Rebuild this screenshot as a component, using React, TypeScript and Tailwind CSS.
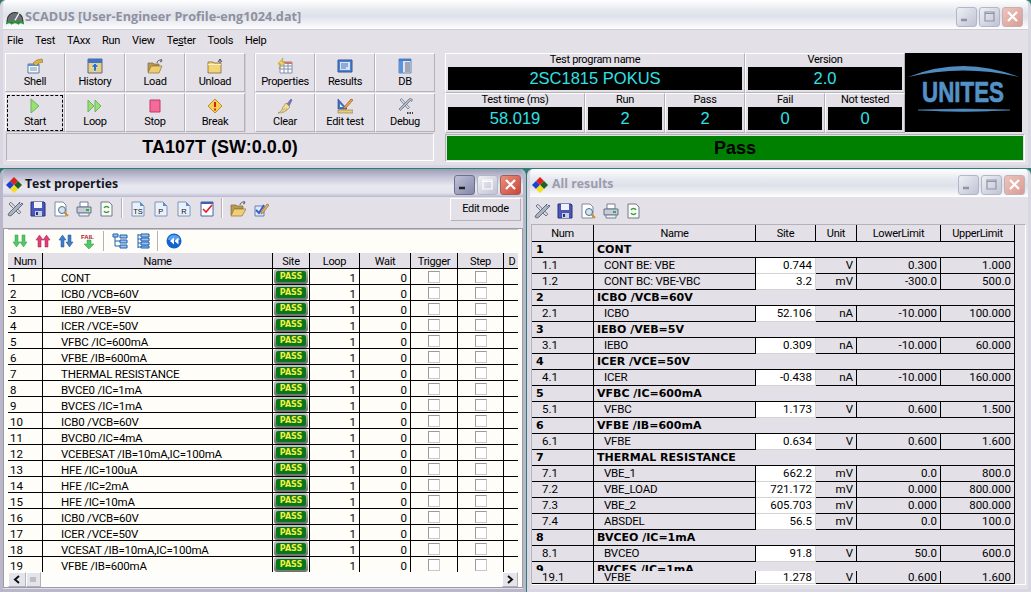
import React from "react";

const bevel = "border border-t-white border-l-white border-r-[#b4b2b8] border-b-[#b4b2b8]";
const sunken = "border border-t-[#b4b2b8] border-l-[#b4b2b8] border-r-white border-b-white";

type IconName = string;

function Icon({ name, size = 16 }: { name: IconName; size?: number }) {
  const c = (() => {
    switch (name) {
      case "shell":
        return (<>
          <path d="M1 6h11v9H1z" fill="#f4f6fb" stroke="#5b7ba8" />
          <path d="M1 6h11v2H1z" fill="#5b8fd0" />
          <path d="M3 10h7M3 12h7" stroke="#7d93b5" />
          <path d="M6 5l4-3 5-1 1 3-4 1-3 3z" fill="#e0b040" stroke="#8a6a20" strokeWidth=".6" />
        </>);
      case "history":
        return (<>
          <path d="M1 1h14v14H1z" fill="#e9cf7c" stroke="#55688a" />
          <path d="M1 1h14v4H1z" fill="#3f73c4" />
          <path d="M8 5l4 4H9.500v4h-3V9H4z" fill="#2f6fc6" stroke="#fff" strokeWidth=".5" />
        </>);
      case "load":
        return (<>
          <path d="M1 5h5l1 1h5v2H5l-3 6H1z" fill="#b89a50" stroke="#7a6a3a" strokeWidth=".7" />
          <path d="M4 8h11l-3 7H1z" fill="#f0cc70" stroke="#8a7440" strokeWidth=".7" />
          <path d="M10 5c0-2 2-3 4-3M14 1l1 2-2 1" stroke="#556" fill="none" />
        </>);
      case "unload":
        return (<>
          <path d="M1 4h5l1 1h7v10H1z" fill="#f3d479" stroke="#7d6b3b" strokeWidth=".8" />
          <path d="M1 6h13v1H1z" fill="#fff0b8" />
          <path d="M11 4l2-3 2 3M13 1v4" stroke="#445" fill="none" strokeWidth=".9" />
        </>);
      case "start":
        return <path d="M4 1l8 7-8 7z" fill="#98e070" stroke="#70b060" />;
      case "loop":
        return (<>
          <path d="M1 2l6 6-6 6z" fill="#98e070" stroke="#70b060" />
          <path d="M8 2l6 6-6 6z" fill="#98e070" stroke="#70b060" />
        </>);
      case "stop":
        return <path d="M3 2h10v12H3z" fill="#f46a98" stroke="#c03868" />;
      case "break":
        return (<>
          <path d="M8 1l7 7-7 7-7-7z" fill="#fbd050" stroke="#b89030" />
          <path d="M8 4v5" stroke="#d02020" strokeWidth="2" />
          <path d="M8 10.500v2" stroke="#d02020" strokeWidth="1.800" />
        </>);
      case "properties":
        return (<>
          <path d="M3 4h12v11H3z" fill="#fdfdfd" stroke="#8090b0" />
          <path d="M8 4h7v2H8z" fill="#e07060" />
          <path d="M3 8h12M3 11h12M7 4v11M11 4v11" stroke="#8090b0" />
          <path d="M6 0L1 6l3 0-2 5 6-7-3 0z" fill="#f8d850" stroke="#a08020" strokeWidth=".5" />
        </>);
      case "results":
        return (<>
          <path d="M1 2h14v12H1z" fill="#4a82d4" stroke="#30558f" />
          <path d="M3 4h10v8H3z" fill="#d4e2f8" />
          <path d="M4 6h7M4 8h7M4 10h5" stroke="#4a72b0" />
        </>);
      case "db":
        return (<>
          <path d="M2 1h12v14H2z" fill="#dfe6f2" stroke="#6a87b0" />
          <path d="M2 1h12v2H2z" fill="#3f7fd0" />
          <path d="M2 3h4v12H2z" fill="#5a94dc" />
          <path d="M8 5h5M8 7h5M8 9h5M8 11h5M8 13h5" stroke="#667" />
        </>);
      case "clear":
        return (<>
          <path d="M10 6l4-5 1 1-3 6z" fill="#7a78c0" stroke="#505090" strokeWidth=".6" />
          <path d="M9 5l4 4-3 3c-2 2-5 3-9 3 3-1 4-3 5-6z" fill="#f2dc98" stroke="#9a8a50" strokeWidth=".7" />
          <path d="M5 14l3-4M8 13l2-3" stroke="#b8a060" strokeWidth=".7" />
        </>);
      case "edit":
        return (<>
          <path d="M1 1v10h9z" fill="#3f74c8" stroke="#2a4f90" strokeWidth=".7" />
          <path d="M3 6v3h3z" fill="#eef" />
          <path d="M1 12h15v3H1z" fill="#e8cd78" stroke="#8a7440" strokeWidth=".6" />
          <path d="M7 9l7-8 2 1-7 8-3 1z" fill="#f0a040" stroke="#805020" strokeWidth=".6" />
        </>);
      case "debug":
        return (<>
          <path d="M3 2l8 9 1.500-1.500-8-9z" fill="#d8dce4" stroke="#60687a" strokeWidth=".7" />
          <path d="M12 1l-9 9-1 1 1.500 1.500 1-1 9-9 1 1 1-1.500-2-2z" fill="#b0bac8" stroke="#60687a" strokeWidth=".7" />
          <path d="M10 15h1.500M12.500 15h1.500M15 15h1" stroke="#111" strokeWidth="1.600" />
        </>);
      case "tools":
        return (<>
          <path d="M2 3l10 10 1.800-1.800-10-10z" fill="#d8dce4" stroke="#50586a" strokeWidth=".8" />
          <path d="M13 1L5 9l-3 3-1 2 2 1 2-1 3-3 8-8-1-1-1.500 1.500-1-1z" fill="#a8b4c4" stroke="#50586a" strokeWidth=".8" />
        </>);
      case "save":
        return (<>
          <path d="M1 1h13l1 1v13H1z" fill="#4a56b8" stroke="#28307a" />
          <path d="M4 1h8v6H4z" fill="#eef2fb" />
          <path d="M5 10h7v5H5z" fill="#c8d0e4" />
          <path d="M6 11h2v3H6z" fill="#28307a" />
        </>);
      case "preview":
        return (<>
          <path d="M2 1h8l3 3v11H2z" fill="#fff" stroke="#7d8ca5" />
          <circle cx="9" cy="9" r="3.500" fill="#cfe6f8" stroke="#5a6a80" />
          <path d="M11.500 11.500l3.500 3.500" stroke="#c89030" strokeWidth="2" />
        </>);
      case "print":
        return (<>
          <path d="M4 1h8v5H4z" fill="#fff" stroke="#70809a" />
          <path d="M1 6h14v6H1z" fill="#c8ccd6" stroke="#60708a" />
          <path d="M3 12h10v3H3z" fill="#eef0f4" stroke="#70809a" />
          <path d="M10 8h3v2h-3z" fill="#30b040" />
        </>);
      case "refresh":
        return (<>
          <path d="M2 1h8l3 3v11H2z" fill="#fbfbf4" stroke="#6a7a90" />
          <path d="M5 7c1-2 4-2 5 0M10 10c-1 2-4 2-5 0" stroke="#30a040" fill="none" strokeWidth="1.300" />
        </>);
      case "docts":
      case "docp":
      case "docr":
        return (<>
          <path d="M2 1h8l4 4v10H2z" fill="#eaf1fb" stroke="#7d96bd" />
          <path d="M10 1v4h4z" fill="#5a8fd4" />
          <text x={name === "docts" ? "3.2" : "5.2"} y="13" fontSize="7.500" fontFamily="Liberation Sans" fill="#111">{name === "docts" ? "TS" : name === "docp" ? "P" : "R"}</text>
        </>);
      case "check":
        return (<>
          <path d="M2 1h12v14H2z" fill="#fff" stroke="#4a62a0" />
          <path d="M2 1h12v2H2z" fill="#3f62b0" />
          <path d="M4 8l3 3 6-7" stroke="#e02020" fill="none" strokeWidth="1.600" />
        </>);
      case "open":
        return (<>
          <path d="M1 4h5l1 1h6v3H5l-3 6H1z" fill="#b89a50" stroke="#7a6a3a" strokeWidth=".7" />
          <path d="M4 8h12l-4 7H1z" fill="#f2cd72" stroke="#8a7440" strokeWidth=".7" />
          <path d="M10 4c0-2 2-3 4-3M14 0l1 2-2 1" stroke="#556" fill="none" />
        </>);
      case "checkpen":
        return (<>
          <path d="M2 5h9v10H2z" fill="#dfe8f8" stroke="#6a7fb0" />
          <path d="M3 9l3 3 5-8" stroke="#2f5fc0" fill="none" strokeWidth="1.800" />
          <path d="M8 11l6-8 2 1-6 8-2 1z" fill="#e8b060" stroke="#806030" strokeWidth=".6" />
        </>);
      case "down":
      case "up":
        return (<g transform={name === "up" ? "rotate(180 8 8)" : undefined}>
          <path d="M3 2h3v7h2l-3.500 5L1 9h2z" fill={name === "up" ? "#e0407a" : "#50c868"} stroke={name === "up" ? "#a01850" : "#2e9848"} strokeWidth=".5" />
          <path d="M10 2h3v7h2l-3.500 5L8 9h2z" fill={name === "up" ? "#e0407a" : "#50c868"} stroke={name === "up" ? "#a01850" : "#2e9848"} strokeWidth=".5" />
        </g>);
      case "updown":
        return (<>
          <path d="M3 14h3V7h2L4.500 2 1 7h2z" fill="#3f7fc8" stroke="#1f5090" strokeWidth=".5" />
          <path d="M10 2h3v7h2l-3.500 5L8 9h2z" fill="#3f7fc8" stroke="#1f5090" strokeWidth=".5" />
        </>);
      case "fail":
        return (<>
          <path d="M6 7h4v4h3l-5 5-5-5h3z" fill="#50c868" stroke="#2e9848" strokeWidth=".5" />
          <text x="0" y="6" fontSize="6" fontWeight="700" fontFamily="Liberation Sans" fill="#b01030">FAIL</text>
        </>);
      case "tree1":
        return (<>
          <path d="M3 3v10h5M3 8h5" stroke="#2060b0" fill="none" />
          <path d="M1 1h5v3H1zM8 2h7v3H8zM8 7h7v3H8zM8 12h7v3H8z" fill="#9cc4f0" stroke="#1f5fb0" />
        </>);
      case "tree2":
        return (<>
          <path d="M3 1v14" stroke="#2060b0" />
          <path d="M6 1h8v3H6zM6 5h8v3H6zM6 9h8v3H6zM6 13h8v2H6z" fill="#9cc4f0" stroke="#1f5fb0" />
          <path d="M3 2h3M3 6h3M3 10h3M3 14h3" stroke="#2060b0" />
        </>);
      case "rewind":
        return (<>
          <circle cx="8" cy="8" r="7.500" fill="#1464d0" />
          <path d="M2 7a6 5 0 0112 0z" fill="#5aa0f0" />
          <path d="M8 4.500L4 8l4 3.500zM12.500 4.500L8.500 8l4 3.500z" fill="#fff" />
        </>);
      case "diamond":
        return (<>
          <path d="M8 0l4 4-4 4-4-4z" fill="#e02020" />
          <path d="M12 4l4 4-4 4-4-4z" fill="#206020" />
          <path d="M4 4l4 4-4 4-4-4z" fill="#2040d0" />
          <path d="M8 8l4 4-4 4-4-4z" fill="#f0e020" />
        </>);
      case "app":
        return (<>
          <path d="M1 11a7 7 0 0114 0v2H1z" fill="#6a7070" stroke="#333" />
          <path d="M8 11l4-7" stroke="#f0f0f0" strokeWidth="1.200" />
          <path d="M0 14l3-2 2 2 3-2 3 2 2-2 3 2" stroke="#20a030" fill="none" strokeWidth="1.400" />
        </>);
      default:
        return null;
    }
  })();
  return (
    <svg width={size} height={size} viewBox="0 0 16 16" className="shrink-0 block">
      {c}
    </svg>
  );
}

function WinBtn({ kind, tone }: { kind: "min" | "max" | "close"; tone: "active" | "idle" }) {
  const bg =
    kind === "close"
      ? tone === "active"
        ? "bg-[linear-gradient(135deg,#e9907f,#cc4438)] border-[#a0605a]"
        : "bg-[linear-gradient(135deg,#eec4bc,#d89c94)] border-[#c4b0b8]"
      : kind === "min" && tone === "active"
      ? "bg-[linear-gradient(135deg,#c0c2d8,#8486aa)] border-[#6f7090]"
      : "bg-[linear-gradient(135deg,#eef0f4,#bfc3d4)] border-[#b4b6c8]";
  const stroke = tone === "active" && kind === "min" ? "#222" : "#fff";
  const strokeBox = tone === "active" || kind === "close" ? "#fff" : "#8f93a8";
  return (
    <div className={`w-[21px] h-[20px] rounded-[3px] border flex items-center justify-center ${bg}`}>
      <svg width="15" height="15" viewBox="0 0 15 15">
        {kind === "min" && <path d="M2 11h6" stroke={tone === "active" ? stroke : "#8f93a8"} strokeWidth="2.500" />}
        {kind === "max" && <path d="M3 3h9v9H3zM3 4.500h9" fill="none" stroke={strokeBox} strokeWidth="1.200" />}
        {kind === "close" && <path d="M3 3l9 9M12 3l-9 9" stroke="#fff" strokeWidth="2.200" />}
      </svg>
    </div>
  );
}

function WinControls({ min }: { min: "active" | "idle" }) {
  return (
    <div className="flex gap-[2px] items-center">
      <WinBtn kind="min" tone={min} />
      <WinBtn kind="max" tone={min} />
      <WinBtn kind="close" tone={min} />
    </div>
  );
}

function ToolBtn({ icon, label, focus }: { icon: string; label: string; focus?: boolean }) {
  return (
    <div className={`w-[60px] h-[39px] flex items-center justify-center ${bevel}`}>
      <div className={`w-[56px] h-[36px] flex flex-col items-center justify-start pt-[2px] ${focus ? "border border-dashed border-black" : "border border-transparent"}`}>
        <Icon name={icon} />
        <span className="text-[11px] tracking-[-0.3px] leading-[14px] mt-[1px] text-black">{label}</span>
      </div>
    </div>
  );
}

function Readout({ label, value, w }: { label: string; value: string; w: string }) {
  return (
    <div className={`${w} h-[40px] flex flex-col ${bevel}`}>
      <div className="h-[12px] text-center text-[11px] tracking-[-0.3px] leading-[12px] text-black">{label}</div>
      <div className="mx-[2px] mt-[1px] h-[23px] bg-black text-center text-[#30e0e8] text-[16.5px] leading-[23px] font-['Liberation_Sans',sans-serif]">{value}</div>
    </div>
  );
}

const leftRows = [
  "CONT",
  "ICB0 /VCB=60V",
  "IEB0 /VEB=5V",
  "ICER /VCE=50V",
  "VFBC /IC=600mA",
  "VFBE /IB=600mA",
  "THERMAL RESISTANCE",
  "BVCE0 /IC=1mA",
  "BVCES /IC=1mA",
  "ICB0 /VCB=60V",
  "BVCB0 /IC=4mA",
  "VCEBESAT /IB=10mA,IC=100mA",
  "HFE /IC=100uA",
  "HFE /IC=2mA",
  "HFE /IC=10mA",
  "ICB0 /VCB=60V",
  "ICER /VCE=50V",
  "VCESAT /IB=10mA,IC=100mA",
  "VFBE /IB=600mA",
];

const leftCols = "grid grid-cols-[35px_230px_37px_50px_51px_47px_46px_17px]";
const rightCols = "grid grid-cols-[62px_162px_60px_41px_84px_74px]";
const cell = "border-r border-b border-black h-[16px] leading-[15px] text-[11.5px] text-black overflow-hidden whitespace-nowrap";
const footCell = "border-r border-b border-black h-[13px] leading-[12px] text-[11.5px] text-black overflow-hidden whitespace-nowrap";
const lcell = "border-r border-b border-black h-[16px] leading-[18px] text-[11.5px] text-black overflow-hidden whitespace-nowrap";
const hcell = "border-r border-b border-black h-[17px] leading-[17px] text-[11px] tracking-[-0.3px] text-black text-center bg-[#e4e0e7] overflow-hidden whitespace-nowrap";
const lhcell = "border-r border-b border-black h-[16px] leading-[18px] text-[11px] tracking-[-0.3px] text-black text-center bg-[#e4e0e7] overflow-hidden whitespace-nowrap";

function Check() {
  return <div className="w-[12px] h-[12px] border border-[#9a9a9a] border-r-[#c8c8c8] border-b-[#c8c8c8] bg-white" />;
}

function LeftTable() {
  return (
    <div className="flex-1 min-h-0 overflow-hidden">
      <div className={leftCols}>
        {["Num", "Name", "Site", "Loop", "Wait", "Trigger", "Step", "D"].map((h) => (
          <div key={h} className={lhcell}>{h}</div>
        ))}
      </div>
      {leftRows.map((n, i) => (
        <div key={i} className={leftCols}>
          <div className={`${lcell} pl-[2px]`}>{i + 1}</div>
          <div className={`${lcell} pl-[18px] tracking-[-0.2px]`}>{n}</div>
          <div className={`${lcell} flex items-center justify-center`}>
            <div className="w-[34px] h-[15px] rounded-[3px] bg-[linear-gradient(180deg,#c4c4c4,#6e6e6e)] p-[2px]">
              <div className="h-[11px] rounded-[2px] bg-[#07781a] text-[#f0f040] text-[8px] leading-[11px] font-bold text-center font-['DejaVu_Sans',sans-serif]">PASS</div>
            </div>
          </div>
          <div className={`${lcell} text-right pr-[3px]`}>1</div>
          <div className={`${lcell} text-right pr-[3px]`}>0</div>
          <div className={`${lcell} flex items-center justify-center`}><Check /></div>
          <div className={`${lcell} flex items-center justify-center`}><Check /></div>
          <div className={lcell} />
        </div>
      ))}
    </div>
  );
}

type DR = { n: string; name: string; site: string; unit: string; lo: string; hi: string };
type RR = { g: string; name: string } | DR;

const rightRows: RR[] = [
  { g: "1", name: "CONT" },
  { n: "1.1", name: "CONT BE: VBE", site: "0.744", unit: "V", lo: "0.300", hi: "1.000" },
  { n: "1.2", name: "CONT BC: VBE-VBC", site: "3.2", unit: "mV", lo: "-300.0", hi: "500.0" },
  { g: "2", name: "ICBO /VCB=60V" },
  { n: "2.1", name: "ICBO", site: "52.106", unit: "nA", lo: "-10.000", hi: "100.000" },
  { g: "3", name: "IEBO /VEB=5V" },
  { n: "3.1", name: "IEBO", site: "0.309", unit: "nA", lo: "-10.000", hi: "60.000" },
  { g: "4", name: "ICER /VCE=50V" },
  { n: "4.1", name: "ICER", site: "-0.438", unit: "nA", lo: "-10.000", hi: "160.000" },
  { g: "5", name: "VFBC /IC=600mA" },
  { n: "5.1", name: "VFBC", site: "1.173", unit: "V", lo: "0.600", hi: "1.500" },
  { g: "6", name: "VFBE /IB=600mA" },
  { n: "6.1", name: "VFBE", site: "0.634", unit: "V", lo: "0.600", hi: "1.600" },
  { g: "7", name: "THERMAL RESISTANCE" },
  { n: "7.1", name: "VBE_1", site: "662.2", unit: "mV", lo: "0.0", hi: "800.0" },
  { n: "7.2", name: "VBE_LOAD", site: "721.172", unit: "mV", lo: "0.000", hi: "800.000" },
  { n: "7.3", name: "VBE_2", site: "605.703", unit: "mV", lo: "0.000", hi: "800.000" },
  { n: "7.4", name: "ABSDEL", site: "56.5", unit: "mV", lo: "0.0", hi: "100.0" },
  { g: "8", name: "BVCEO /IC=1mA" },
  { n: "8.1", name: "BVCEO", site: "91.8", unit: "V", lo: "50.0", hi: "600.0" },
  { g: "9", name: "BVCES /IC=1mA" },
];

function DataRow({ n, name, site, unit, lo, hi, foot }: DR & { foot?: boolean }) {
  const c = foot ? footCell : cell;
  return (
    <div className={rightCols}>
      <div className={`${c} pl-[10px]`}>{n}</div>
      <div className={`${c} pl-[10px] tracking-[-0.2px]`}>{name}</div>
      <div className={`${c} bg-white text-right pr-[3px] border-b-[#d4d4d4] border-r-[#d4d4d4]`}>{site}</div>
      <div className={`${c} text-right pr-[3px]`}>{unit}</div>
      <div className={`${c} text-right pr-[3px]`}>{lo}</div>
      <div className={`${c} text-right pr-[3px]`}>{hi}</div>
    </div>
  );
}

function RightTable() {
  return (
    <div className="w-[483px] h-[359px] flex flex-col overflow-hidden">
      <div className={rightCols}>
        {["Num", "Name", "Site", "Unit", "LowerLimit", "UpperLimit"].map((h) => (
          <div key={h} className={hcell}>{h}</div>
        ))}
      </div>
      <div className="h-[329px] overflow-hidden shrink-0">
        {rightRows.map((r, i) =>
          "g" in r ? (
            <div key={i} className="grid grid-cols-[62px_421px]">
              <div className={`${cell} !text-[11px] font-bold pl-[4px] font-['DejaVu_Sans',sans-serif]`}>{r.g}</div>
              <div className={`${cell} !text-[11px] font-bold pl-[3px] font-['DejaVu_Sans',sans-serif]`}>{r.name}</div>
            </div>
          ) : (
            <DataRow key={i} {...r} />
          )
        )}
      </div>
      <div className="shrink-0">
        <DataRow foot n="19.1" name="VFBE" site="1.278" unit="V" lo="0.600" hi="1.600" />
      </div>
    </div>
  );
}

function SmallTools({ items, w = "w-[23px]" }: { items: string[]; w?: string }) {
  return (
    <>
      {items.map((it, i) =>
        it === "|" ? (
          <div key={i} className="w-[2px] h-[20px] mx-[3px] border-l border-l-[#b4b2b8] border-r border-r-white" />
        ) : (
          <div key={i} className={`${w} h-[22px] flex items-center justify-center`}>
            <Icon name={it} />
          </div>
        )
      )}
    </>
  );
}

export default function App() {
  return (
    <div className="w-[1031px] h-[592px] overflow-hidden bg-[#2f7d72] flex flex-col font-['Roboto',Arial,sans-serif] select-none">
      {/* Main window */}
      <div className="h-[168px] shrink-0 rounded-t-[6px] border-x-[3px] border-b-[3px] border-[#d9d8e2] bg-[#e4e0e7] flex flex-col overflow-hidden">
        <div className="h-[29px] shrink-0 flex items-center bg-[linear-gradient(180deg,#ffffff_0%,#e9ecf1_30%,#dde1e9_55%,#f5f6f9_88%,#ffffff_100%)] pt-[4px] pl-[3px] pr-[5px]">
          <Icon name="app" size={18} />
          <span className="ml-[1px] flex-1 text-[12.7px] font-bold text-[#90909f] font-['Open_Sans',sans-serif]">SCADUS [User-Engineer Profile-eng1024.dat]</span>
          <WinControls min="idle" />
        </div>
        <div className="h-[24px] shrink-0 flex items-center gap-[12px] pl-[4px] text-[11px] tracking-[-0.3px] text-black border-t border-[#cfcdd6]">
          <span>File</span>
          <span>Test</span>
          <span>TAxx</span>
          <span>Run</span>
          <span>View</span>
          <span>Te<span className="underline">s</span>ter</span>
          <span>Tools</span>
          <span>Help</span>
        </div>
        <div className="flex pl-[2px]">
          <div className="w-[430px] shrink-0 flex flex-col">
            <div className="flex">
              <div className="grid grid-cols-[60px_60px_60px_60px] gap-y-[1px] w-[240px]">
                <ToolBtn icon="shell" label="Shell" />
                <ToolBtn icon="history" label="History" />
                <ToolBtn icon="load" label="Load" />
                <ToolBtn icon="unload" label="Unload" />
                <ToolBtn icon="start" label="Start" focus />
                <ToolBtn icon="loop" label="Loop" />
                <ToolBtn icon="stop" label="Stop" />
                <ToolBtn icon="break" label="Break" />
              </div>
              <div className="w-[10px] border-x border-x-[#cfcdd6]" />
              <div className="grid grid-cols-[60px_60px_60px] gap-y-[1px] w-[180px]">
                <ToolBtn icon="properties" label="Properties" />
                <ToolBtn icon="results" label="Results" />
                <ToolBtn icon="db" label="DB" />
                <ToolBtn icon="clear" label="Clear" />
                <ToolBtn icon="edit" label="Edit test" />
                <ToolBtn icon="debug" label="Debug" />
              </div>
            </div>
            <div className={`mt-[1px] ml-[1px] h-[28px] w-[428px] flex items-center justify-center pt-[1px] text-[18px] font-bold text-black font-['Liberation_Sans',sans-serif] ${sunken}`}>TA107T (SW:0.0.0)</div>
          </div>
          <div className="w-[10px] shrink-0" />
          <div className="flex flex-col w-[580px]">
            <div className="flex">
              <div className="w-[460px] flex flex-col">
                <div className="flex">
                  <Readout w="w-[300px]" label="Test program name" value="2SC1815 POKUS" />
                  <Readout w="w-[160px]" label="Version" value="2.0" />
                </div>
                <div className="flex">
                  <Readout w="w-[140px]" label="Test time (ms)" value="58.019" />
                  <Readout w="w-[80px]" label="Run" value="2" />
                  <Readout w="w-[80px]" label="Pass" value="2" />
                  <Readout w="w-[80px]" label="Fail" value="0" />
                  <Readout w="w-[80px]" label="Not tested" value="0" />
                </div>
              </div>
              <div className="w-[117px] h-[79px] bg-black flex items-center justify-center">
                <svg width="117" height="79" viewBox="0 0 117 79">
                  <path d="M3 24Q58 2 114 24Q58 11 3 24z" fill="#4f8cc0" />
                  <text x="58" y="49" textAnchor="middle" fontFamily="Liberation Sans" fontWeight="700" fontSize="30" textLength="82" lengthAdjust="spacingAndGlyphs" fill="#5392c8" stroke="#5392c8" strokeWidth=".7">UNITES</text>
                  <path d="M13 57Q58 60 105 57Q58 55 13 57z" fill="#4f8cc0" stroke="#4f8cc0" strokeWidth=".5" />
                </svg>
              </div>
            </div>
            <div className={`mt-[1px] h-[28px] p-[1px] ${sunken}`}>
              <div className="h-full bg-[#008000] flex items-center justify-center pt-[1px] text-[18px] font-bold text-black font-['Liberation_Sans',sans-serif]">Pass</div>
            </div>
          </div>
        </div>
      </div>

      {/* Bottom windows */}
      <div className="flex-1 min-h-0 flex gap-[1px] pt-[1px]">
        {/* Test properties */}
        <div className="w-[526px] shrink-0 rounded-t-[6px] border-x-[3px] border-b-[3px] border-[#b9b8ca] bg-[#e4e0e7] flex flex-col overflow-hidden">
          <div className="h-[28px] shrink-0 flex items-center bg-[linear-gradient(180deg,#9a9ab4_0%,#c0c0d4_25%,#e8e8f0_60%,#e4e4ee_85%,#b8b8cc_100%)] pt-[3px] pl-[3px] pr-[2px]">
            <Icon name="diamond" />
            <span className="ml-[3px] flex-1 text-[12.3px] font-bold text-[#16161e] font-['Open_Sans',sans-serif]">Test properties</span>
            <WinControls min="active" />
          </div>
          <div className="h-[31px] shrink-0 flex items-start pt-[1px]">
            <SmallTools items={["tools", "save", "preview", "print", "refresh", "|", "docts", "docp", "docr", "check", "|", "open", "checkpen"]} />
            <div className="flex-1" />
            <div className={`mr-[2px] w-[71px] h-[23px] flex items-center justify-center text-[11px] tracking-[-0.3px] text-black ${bevel}`}>Edit mode</div>
          </div>
          <div className="flex-1 min-h-0 flex flex-col bg-[#fffdf8] border border-[#9c9aa4] px-[4px] mb-[1px]">
            <div className="h-[24px] shrink-0 flex items-center pb-[2px] border-t border-[#c4c2c8]">
              <SmallTools items={["down", "up", "updown", "fail", "|", "tree1", "tree2", "|", "rewind"]} />
            </div>
            <LeftTable />
            <div className="h-[15px] shrink-0 flex bg-[#fdfdfb]">
              <div className={`w-[18px] flex items-center justify-center bg-[#e4e4ec] ${bevel}`}>
                <svg width="8" height="9" viewBox="0 0 8 9"><path d="M6 1L2 4.500 6 8" fill="none" stroke="#111" strokeWidth="2" /></svg>
              </div>
              <div className={`w-[15px] flex items-center justify-center bg-[#e4e4ec] ${bevel}`}>
                <svg width="7" height="7" viewBox="0 0 7 7"><path d="M1 1v5M3 1v5M5 1v5" stroke="#999" /></svg>
              </div>
              <div className="flex-1" />
              <div className={`w-[16px] flex items-center justify-center bg-[#e4e4ec] ${bevel}`}>
                <svg width="8" height="9" viewBox="0 0 8 9"><path d="M2 1l4 3.500L2 8" fill="none" stroke="#111" strokeWidth="2" /></svg>
              </div>
            </div>
          </div>
        </div>

        {/* All results */}
        <div className="flex-1 rounded-t-[6px] border-x-[3px] border-b-[3px] border-[#d9d8e2] bg-[#e4e0e7] flex flex-col overflow-hidden">
          <div className="h-[28px] shrink-0 flex items-center bg-[linear-gradient(180deg,#ffffff_0%,#e9ecf1_30%,#dde1e9_60%,#f5f6f9_90%,#ffffff_100%)] pt-[3px] pl-[2px] pr-[3px]">
            <Icon name="diamond" />
            <span className="ml-[4px] flex-1 text-[12.3px] font-bold text-[#9c9cac] font-['Open_Sans',sans-serif]">All results</span>
            <WinControls min="idle" />
          </div>
          <div className="h-[27px] shrink-0 flex items-center">
            <SmallTools items={["tools", "save", "preview", "print", "refresh"]} />
          </div>
          <div className={`ml-[1px] h-[361px] w-[495px] ${sunken}`}>
            <RightTable />
          </div>
        </div>
      </div>
    </div>
  );
}
